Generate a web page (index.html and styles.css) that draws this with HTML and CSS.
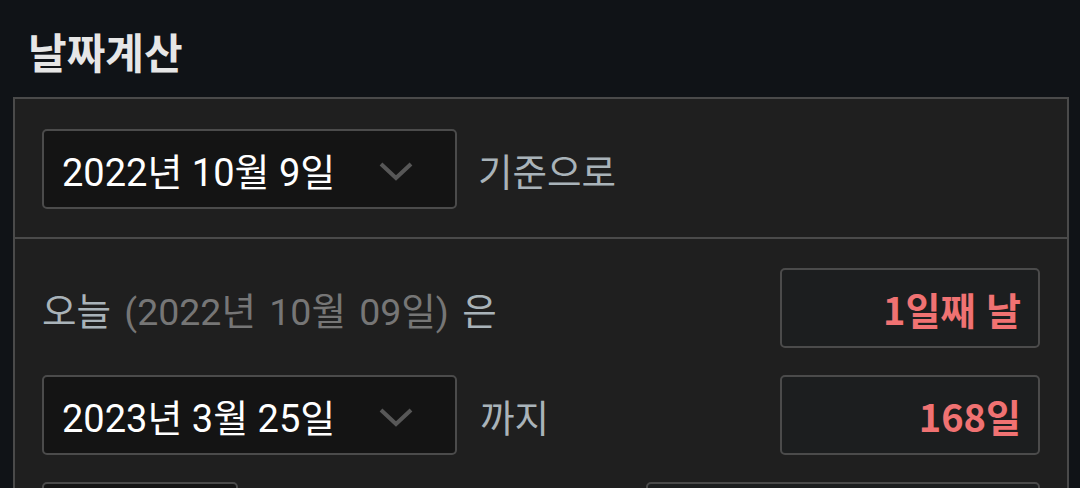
FILE: index.html
```html
<!DOCTYPE html>
<html lang="ko">
<head>
  <meta charset="UTF-8" />
  <meta name="viewport" content="width=device-width, initial-scale=1.0" />
  <title>날짜계산</title>
  <link rel="stylesheet" href="styles.css">
</head>
<body>
  <h1 class="title">날짜계산</h1>

  <div class="panel">
    <div class="section base">
      <div class="select">
        <span>2022년 10월 9일</span>
        <svg class="chevron" width="34" height="20" viewBox="0 0 34 20"><polyline points="2,3 17,17 32,3" fill="none" stroke="#575757" stroke-width="4"/></svg>
      </div>
      <span class="label">기준으로</span>
    </div>

    <div class="section result">
      <div class="row">
        <span class="label today">오늘 <span class="muted">(2022년 10월 09일)</span> 은</span>
        <div class="output">1일째 날</div>
      </div>
      <div class="row">
        <div class="select">
          <span>2023년 3월 25일</span>
          <svg class="chevron" width="34" height="20" viewBox="0 0 34 20"><polyline points="2,3 17,17 32,3" fill="none" stroke="#575757" stroke-width="4"/></svg>
        </div>
        <span class="label">까지</span>
        <div class="output">168일</div>
      </div>
      <div class="row">
        <div class="select small"></div>
        <div class="output wide"></div>
      </div>
    </div>
  </div>
</body>
</html>
```

FILE: styles.css
```css
body {
  margin: 0;
  background-color: #101317;
  color: #ffffff;
  font-family: Roboto, "Noto Sans CJK KR", sans-serif;
  overflow: hidden;
}

.title {
  margin: 0;
  padding: 4px 28px 0;
  line-height: 93px;
  font-size: 42px;
  font-weight: 700;
  color: #e6e6e6;
  font-family: "Noto Sans CJK KR", sans-serif;
}

.panel {
  margin: 0 11px 0 13px;
  border: 2px solid #4a4a4a;
  background-color: #1f1f1f;
}

.section {
  padding: 30px 27px 28px;
}

.base {
  display: flex;
  align-items: center;
  gap: 21px;
  border-bottom: 2px solid #4a4a4a;
}

.result {
  display: flex;
  flex-direction: column;
  gap: 27px;
  padding-top: 29px;
}

.row {
  display: flex;
  align-items: center;
  gap: 23px;
}

.select {
  box-sizing: border-box;
  width: 415px;
  height: 80px;
  display: flex;
  align-items: center;
  justify-content: space-between;
  padding: 0 42px 0 18px;
  border: 2px solid #4b4b4b;
  border-radius: 5px;
  background-color: #141414;
  font-size: 38px;
  color: #ffffff;
}

.select.small {
  width: 196px;
}

.chevron {
  margin-top: 4px;
}

.label {
  font-size: 37.5px;
  color: #a9b3b9;
}

.today {
  word-spacing: 4px;
}

.muted {
  color: #767676;
}

.output {
  box-sizing: border-box;
  margin-left: auto;
  width: 260px;
  height: 80px;
  display: flex;
  align-items: center;
  justify-content: flex-end;
  padding-right: 17px;
  border: 2px solid #4b4b4b;
  border-radius: 5px;
  background-color: #1c1e1f;
  font-family: "Noto Sans CJK KR", sans-serif;
  font-size: 38px;
  font-weight: 700;
  color: #f07272;
}

.output.wide {
  width: 394px;
}
```
